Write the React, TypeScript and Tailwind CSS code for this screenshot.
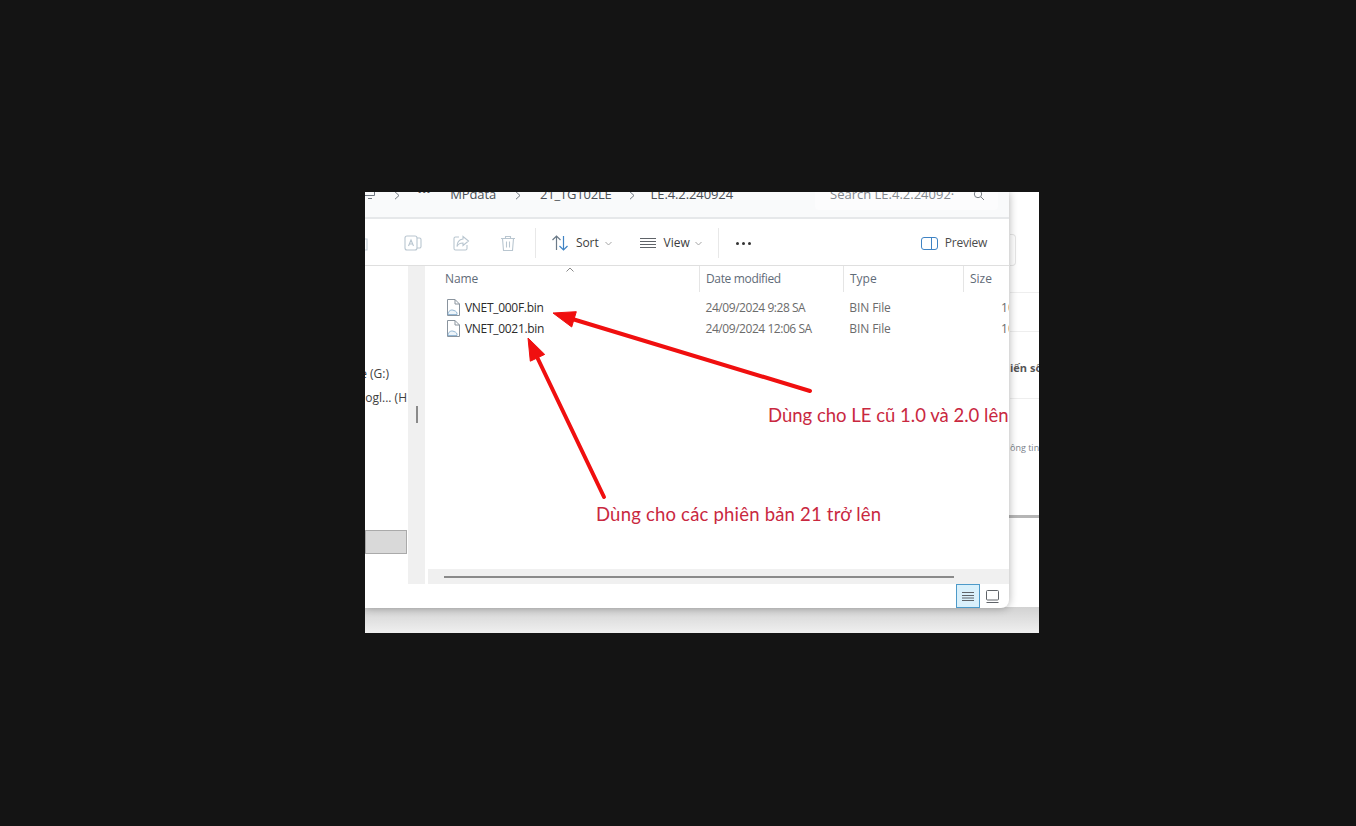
import React from "react";

function FileIcon() {
  return (
    <svg width="14" height="17" viewBox="0 0 14 17" fill="none" className="shrink-0">
      <path d="M1.5 .5H9L13.5 5V16.5H1.5Z" fill="#fff" stroke="#8a949e" />
      <path d="M9 .5V5H13.5" stroke="#8a949e" />
      <path d="M2 15.5C2 12 5 10 8 11.5C10 12 11.5 13.5 11 15.5Z" fill="#eef5fa" stroke="#7aa5c8" strokeWidth=".8" />
    </svg>
  );
}

function Row({ name, date }: { name: string; date: string }) {
  return (
    <div className="flex h-[21px] items-center text-[12px] text-[#6b6b6b]">
      <div className="flex w-[281px] items-center gap-[5px] pl-[21px]">
        <FileIcon />
        <span className="text-[#2b2b2b] tracking-[-0.3px]">{name}</span>
      </div>
      <span className="w-[144px] tracking-[-0.45px]">{date}</span>
      <span className="w-[152px] tracking-[-0.1px]">BIN File</span>
      <span className="w-[8px] overflow-hidden">10</span>
    </div>
  );
}

function ToolIcon({ children }: { children: React.ReactNode }) {
  return (
    <svg width="18" height="18" viewBox="0 0 18 18" fill="none" stroke="#b9c6d0" strokeWidth="1.1" className="shrink-0">
      {children}
    </svg>
  );
}

function Chevron() {
  return (
    <svg width="7" height="5" viewBox="0 0 7 5" fill="none" stroke="#a5a5a5">
      <path d="M.5 1 3.5 4 6.5 1" />
    </svg>
  );
}

function Crumb() {
  return (
    <svg width="6" height="9" viewBox="0 0 6 9" fill="none" stroke="#6f7780" className="shrink-0">
      <path d="M1 .8 5 4.5 1 8.2" />
    </svg>
  );
}

export default function App() {
  return (
    <div className="flex h-[826px] w-[1356px] bg-[#141414] pl-[365px] pt-[192px] font-['Open_Sans',sans-serif]">
      <div className="relative h-[441px] w-[674px] overflow-hidden bg-white">
        {/* page behind the window */}
        <div className="absolute bottom-0 left-0 h-[26px] w-full bg-gradient-to-b from-[#d2d2d2] to-[#f0f0f0]" />
        <div className="absolute right-0 top-[323px] h-[3px] w-[30px] bg-[#b5b5b5]" />
        <div className="absolute left-[645px] top-[168px] text-[11px] font-bold leading-[16px] whitespace-nowrap text-[#555]">iến số</div>
        <div className="absolute left-[645px] top-[249px] text-[9px] leading-[14px] whitespace-nowrap text-[#7a7f8a]">ông tin</div>
        <div className="absolute left-[645px] top-[100px] h-px w-[29px] bg-[#eeeeee]" />
        <div className="absolute left-[645px] top-[139px] h-px w-[29px] bg-[#eeeeee]" />
        <div className="absolute left-[645px] top-[206px] h-px w-[29px] bg-[#eeeeee]" />
        <div className="absolute left-[645px] top-[42px] h-[32px] w-[6px] rounded-r border border-l-0 border-[#e6e6e6]" />

        {/* explorer window */}
        <div className="relative flex h-[416px] w-[644px] flex-col rounded-br-[8px] bg-white shadow-[0_0_8px_rgba(0,0,0,0.32)]">
          {/* address bar */}
          <div className="flex h-[27px] shrink-0 items-start overflow-hidden border-b-2 border-[#e6e8ea] bg-[#f9fafb] text-[13px] leading-[16px] text-[#4a4f55]">
            <svg width="12" height="9" viewBox="0 0 12 9" fill="none" stroke="#6f7780" className="shrink-0">
              <path d="M-2 -1V3.5H9.5V-1M3 6.5H7" />
            </svg>
            <div className="ml-[17px] mt-[-6px] flex items-center">
              <span className="mt-[3px]"><Crumb /></span>
              <span className="ml-[18px] mt-[-5px] text-[9px] font-bold tracking-[1px]">•••</span>
              <span className="ml-[19px] tracking-[-0.1px]">MPdata</span>
              <span className="ml-[19px] mt-[3px]"><Crumb /></span>
              <span className="ml-[19px] tracking-[-0.2px]">21_TG102LE</span>
              <span className="ml-[17px] mt-[3px]"><Crumb /></span>
              <span className="ml-[16px] tracking-[-0.1px]">LE.4.2.240924</span>
            </div>
            <div className="ml-[82px] flex h-[18px] w-[183px] shrink-0 items-start rounded-b bg-[#fcfcfd] pl-[15px] text-[13px] text-[#83888e]">
              <span className="mt-[-6px] whitespace-nowrap">Search LE.4.2.24092·</span>
              <svg width="12" height="12" viewBox="0 0 12 12" fill="none" stroke="#7b8086" className="ml-[19px] mt-[-3px] shrink-0">
                <circle cx="5" cy="5" r="3.7" />
                <path d="M8 8l3 3" />
              </svg>
            </div>
          </div>

          {/* toolbar */}
          <div className="flex h-[47px] shrink-0 items-center border-b border-[#dfdfdf] pt-[2px] text-[12px] text-[#3d3d3d]">
            <div className="w-[6px] overflow-hidden">
              <svg width="18" height="18" viewBox="0 0 18 18" fill="none" stroke="#c5d0d8" strokeWidth="1.1" className="ml-[-11px]">
                <path d="M3 5H13V16H3ZM6 5V2H10V5" />
              </svg>
            </div>
            <div className="ml-[33px]">
              <ToolIcon>
                <rect x="1" y="2" width="12" height="14" rx="2" />
                <path d="M13 4h2.5a1.5 1.5 0 0 1 1.5 1.5v7a1.5 1.5 0 0 1-1.5 1.5H13M4.5 12 7 6l2.5 6M5.5 10h3" />
              </ToolIcon>
            </div>
            <div className="ml-[30px]">
              <ToolIcon>
                <path d="M7 3H3.5A1.5 1.5 0 0 0 2 4.500V14.500A1.500 1.500 0 0 0 3.500 16H13.500A1.500 1.500 0 0 0 15 14.500V11" />
                <path d="M11 2.500 16.500 7 11 11.500V9C8 9 6 10 5 12.500 5 8 7.500 5.500 11 5Z" />
              </ToolIcon>
            </div>
            <div className="ml-[29px]">
              <ToolIcon>
                <path d="M2 4.500H16M6.500 4.500V2.500H11.500V4.500M3.500 4.500 4.500 16.500H13.500L14.500 4.500M7.500 7.500V13.500M10.500 7.500V13.500" />
              </ToolIcon>
            </div>
            <div className="ml-[18px] h-[30px] w-px bg-[#e8e8e8]" />
            <svg width="18" height="18" viewBox="0 0 18 18" fill="none" strokeWidth="1.2" className="ml-[15px]">
              <path d="M5.500 16V2M1.500 6 5.500 2 9.500 6" stroke="#6b7a88" />
              <path d="M12.500 2V16M8.500 12 12.500 16 16.500 12" stroke="#3f83c4" />
            </svg>
            <span className="ml-[7px] tracking-[-0.1px]">Sort</span>
            <span className="ml-[6px]"><Chevron /></span>
            <svg width="16" height="12" viewBox="0 0 16 12" stroke="#5f6368" className="ml-[28px]">
              <path d="M0 1.500H16M0 4.500H16M0 7.500H16M0 10.500H16" />
            </svg>
            <span className="ml-[8px]">View</span>
            <span className="ml-[5px]"><Chevron /></span>
            <div className="ml-[16px] h-[30px] w-px bg-[#e8e8e8]" />
            <div className="ml-[17px] flex gap-[3px]">
              <div className="size-[3px] rounded-full bg-[#333]" />
              <div className="size-[3px] rounded-full bg-[#333]" />
              <div className="size-[3px] rounded-full bg-[#333]" />
            </div>
            <svg width="17" height="13" viewBox="0 0 17 13" fill="none" stroke="#3f83c4" className="ml-[170px]">
              <rect x=".5" y=".5" width="16" height="12" rx="2.500" />
              <path d="M10.500 .5V12.500" />
            </svg>
            <span className="ml-[7px] font-medium tracking-[-0.25px] text-[#4b4b4b]">Preview</span>
          </div>

          {/* body */}
          <div className="flex min-h-0 flex-1">
            <div className="flex w-[43px] shrink-0 flex-col items-end overflow-hidden pt-[96px] text-[12px] leading-[24px] whitespace-nowrap text-[#3f3f3f]">
              <span className="mr-[19px]">e (G:)</span>
              <span className="mr-[1px]">ogl... (H</span>
              <div className="mt-[120px] mr-[1px] h-[24px] w-[42px] shrink-0 border border-[#aaaaaa] bg-[#d9d9d9]" />
            </div>
            <div className="flex h-[318px] w-[17px] shrink-0 items-start justify-center bg-[#f0f0f0] pt-[140px]">
              <div className="h-[17px] w-[2px] bg-[#8a8a8a]" />
            </div>
            <div className="relative flex min-w-0 flex-1 flex-col">
              <div className="absolute left-[141px] top-[1px]">
                <svg width="8" height="5" viewBox="0 0 8 5" fill="none" stroke="#888">
                  <path d="M.5 4.500 4 1 7.500 4.500" />
                </svg>
              </div>
              <div className="flex h-[26px] shrink-0 items-center text-[12px] text-[#5f6b78]">
                <span className="w-[275px] border-r border-[#e5e5e5] pl-[20px] leading-[26px] tracking-[-0.1px]">Name</span>
                <span className="w-[144px] border-r border-[#e5e5e5] pl-[6px] leading-[26px] tracking-[-0.35px]">Date modified</span>
                <span className="w-[120px] border-r border-[#e5e5e5] pl-[6px] leading-[26px]">Type</span>
                <span className="pl-[6px] leading-[26px]">Size</span>
              </div>
              <div className="pt-[5px]">
                <Row name="VNET_000F.bin" date="24/09/2024 9:28 SA" />
                <Row name="VNET_0021.bin" date="24/09/2024 12:06 SA" />
              </div>
              <div className="flex-1" />
              <div className="ml-[3px] flex h-[15px] shrink-0 items-center bg-[#f0f0f0] pl-[16px]">
                <div className="h-[2px] w-[510px] bg-[#8a8a8a]" />
              </div>
              <div className="flex h-[24px] shrink-0 items-start justify-end pr-[10px]">
                <div className="flex h-[24px] w-[24px] items-center justify-center border border-[#4d9ac9] bg-[#d9f0fb]">
                  <svg width="12" height="11" viewBox="0 0 12 11" stroke="#5f6368">
                    <path d="M0 1.500H12M0 4.500H12M0 7H12M0 9.500H12" />
                  </svg>
                </div>
                <svg width="13" height="13" viewBox="0 0 13 13" fill="none" stroke="#5f6368" className="ml-[6px] mt-[6px]">
                  <rect x=".5" y=".5" width="12" height="9.500" rx="1" />
                  <path d="M.5 12.500H12.500" />
                </svg>
              </div>
            </div>
          </div>
        </div>

        {/* annotations */}
        <svg width="674" height="441" viewBox="0 0 674 441" fill="none" className="absolute left-0 top-0">
          <path d="M445 199 209 127.500" stroke="#f00f0f" strokeWidth="4" strokeLinecap="round" />
          <path d="M188 121 211.300 119.700 206.700 135Z" fill="#f00f0f" stroke="#f00f0f" />
          <path d="M239 305 172.500 166" stroke="#f00f0f" strokeWidth="4" strokeLinecap="round" />
          <path d="M163 146 179.700 162.400 165.300 169.200Z" fill="#f00f0f" stroke="#f00f0f" />
        </svg>
        <div className="absolute left-[403px] top-[211px] font-['Lato',sans-serif] text-[18.5px] leading-[24px] whitespace-nowrap text-[#c9283f]">Dùng cho LE cũ 1.0 và 2.0 lên</div>
        <div className="absolute left-[231px] top-[310px] font-['Lato',sans-serif] text-[18.5px] tracking-[0.2px] leading-[24px] whitespace-nowrap text-[#c9283f]">Dùng cho các phiên bản 21 trở lên</div>
      </div>
    </div>
  );
}
